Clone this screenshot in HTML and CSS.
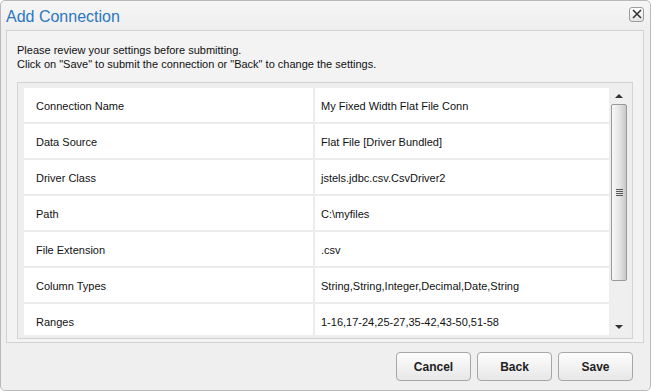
FILE: index.html
```html
<html>
<head>
<title>Add Connection</title>
<link rel="stylesheet" href="styles.css">
</head>
<body>
<div class="dialog">
  <div class="titlebar">
    <span class="title">Add Connection</span>
    <span class="close">
      <svg width="10" height="10" viewBox="0 0 10 10"><path d="M1 1L9 9M9 1L1 9" stroke="#333" stroke-width="1.6" fill="none"/></svg>
    </span>
  </div>

  <div class="panel">
    <div class="intro">
      <div>Please review your settings before submitting.</div>
      <div>Click on "Save" to submit the connection or "Back" to change the settings.</div>
    </div>

    <div class="gridbox">
      <div class="grid">
        <div class="rows">
          <div class="row"><div class="key">Connection Name</div><div class="val">My Fixed Width Flat File Conn</div></div>
          <div class="row"><div class="key">Data Source</div><div class="val">Flat File [Driver Bundled]</div></div>
          <div class="row"><div class="key">Driver Class</div><div class="val">jstels.jdbc.csv.CsvDriver2</div></div>
          <div class="row"><div class="key">Path</div><div class="val">C:\myfiles</div></div>
          <div class="row"><div class="key">File Extension</div><div class="val">.csv</div></div>
          <div class="row"><div class="key">Column Types</div><div class="val">String,String,Integer,Decimal,Date,String</div></div>
          <div class="row"><div class="key">Ranges</div><div class="val">1-16,17-24,25-27,35-42,43-50,51-58</div></div>
        </div>
        <div class="scrollbar">
          <div class="arrow up"></div>
          <div class="thumb"><div class="grip"></div></div>
          <div class="track"></div>
          <div class="arrow down"></div>
        </div>
      </div>
    </div>
  </div>

  <div class="footer">
    <button class="btn">Cancel</button>
    <button class="btn">Back</button>
    <button class="btn">Save</button>
  </div>
</div>
</body>
</html>
```

FILE: styles.css
```css
body {
    margin: 0;
    font-family: "Liberation Sans", Arial, sans-serif;
    font-size: 11px;
    color: #111;
    background: #ffffff;
}

.dialog {
    width: 651px;
    height: 391px;
    box-sizing: border-box;
    border: 1px solid #b9b9b9;
    border-radius: 5px;
    background: #efefef;
    display: flex;
    flex-direction: column;
}

.titlebar {
    height: 29px;
    flex: none;
    display: flex;
    align-items: center;
    justify-content: space-between;
    padding: 0 6px 0 5px;
    background: linear-gradient(#f6f6f6, #eeeeee);
    border-radius: 5px 5px 0 0;
}

.title {
    font-size: 16px;
    color: #2a78bd;
    margin-top: 2px;
}

.close {
    width: 13px;
    height: 13px;
    border: 1px solid #9c9c9c;
    border-radius: 3px;
    background: linear-gradient(#ffffff, #e4e4e4);
    display: flex;
    align-items: center;
    justify-content: center;
    margin-top: -3px;
}

.panel {
    margin: 0 6px 0 5px;
    height: 313px;
    flex: none;
    box-sizing: border-box;
    border: 1px solid #d2d2d2;
    background: #f3f3f3;
    padding: 12px 10px 0 10px;
}

.intro div {
    line-height: 14px;
}

.gridbox {
    margin-top: 11px;
    height: 257px;
    box-sizing: border-box;
    border: 1px solid #d4d4d4;
    background: #eeeeee;
    padding: 5px 4px 3px 6px;
}

.grid {
    display: flex;
    height: 100%;
    overflow: hidden;
}

.rows {
    width: 585px;
    background: #ffffff;
    overflow: hidden;
}

.row {
    display: flex;
    height: 36px;
    box-sizing: border-box;
    border-bottom: 2px solid #ececec;
}

.key {
    width: 291px;
    padding: 2px 0 0 12px;
    box-sizing: border-box;
    display: flex;
    align-items: center;
    border-right: 2px solid #ececec;
}

.val {
    padding: 2px 0 0 6px;
    display: flex;
    align-items: center;
}

.scrollbar {
    width: 16px;
    margin-left: 2px;
    display: flex;
    flex-direction: column;
    background: #efefef;
}

.arrow {
    height: 16px;
    display: flex;
    align-items: center;
    justify-content: center;
}

.arrow.up::after {
    content: "";
    border-left: 4px solid transparent;
    border-right: 4px solid transparent;
    border-bottom: 4px solid #333;
}

.arrow.down::after {
    content: "";
    border-left: 4px solid transparent;
    border-right: 4px solid transparent;
    border-top: 4px solid #333;
}

.thumb {
    height: 177px;
    box-sizing: border-box;
    border: 1px solid #9a9a9a;
    border-radius: 2px;
    background: linear-gradient(90deg, #f8f8f8, #e6e6e6 50%, #c8c8c8);
    display: flex;
    align-items: center;
    justify-content: center;
}

.grip {
    width: 7px;
    height: 7px;
    background: repeating-linear-gradient(#555 0, #555 1px, transparent 1px, transparent 2px);
}

.track {
    flex: 1;
}

.footer {
    flex: 1;
    display: flex;
    justify-content: flex-end;
    align-items: flex-start;
    gap: 6px;
    padding: 9px 17px 0 0;
}

.btn {
    width: 75px;
    height: 29px;
    border: 1px solid #a6a6a6;
    border-radius: 4px;
    background: linear-gradient(#fdfdfd, #e7e7e7);
    font-family: "Liberation Sans", Arial, sans-serif;
    font-size: 12px;
    font-weight: bold;
    color: #222;
    padding: 0;
}
```
